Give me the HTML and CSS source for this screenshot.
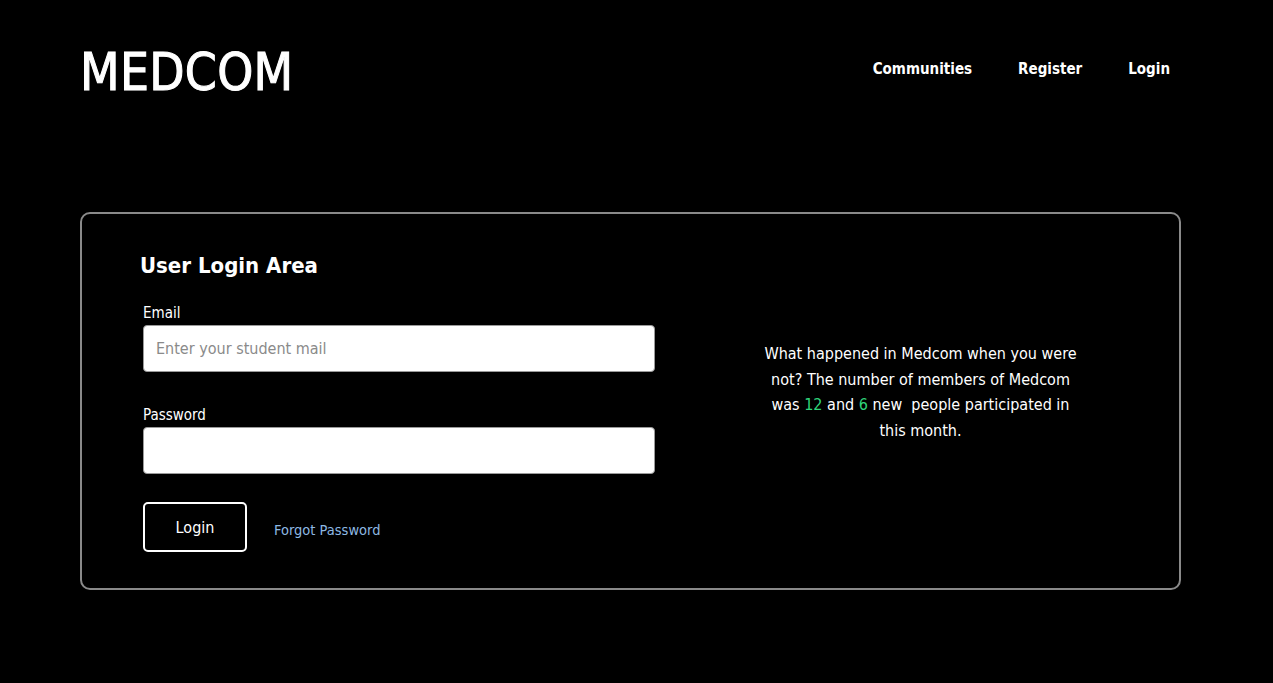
FILE: index.html
```html
<!DOCTYPE html>
<html lang="en">
<head>
<meta charset="utf-8">
<title>Medcom - Login</title>
<link rel="stylesheet" href="styles.css">
</head>
<body>
<header class="topbar">
  <div class="logo">MEDCOM</div>
  <nav class="nav">
    <a href="#" class="nav-link">Communities</a>
    <a href="#" class="nav-link">Register</a>
    <a href="#" class="nav-link">Login</a>
  </nav>
</header>
<main class="main">
  <section class="card">
    <div class="form-col">
      <h1 class="title">User Login Area</h1>
      <form class="form">
        <label class="label" for="email">Email</label>
        <input class="input" id="email" type="text" placeholder="Enter your student mail">
        <label class="label label-second" for="password">Password</label>
        <input class="input" id="password" type="password">
        <div class="actions">
          <button type="button" class="btn">Login</button>
          <a href="#" class="forgot">Forgot Password</a>
        </div>
      </form>
    </div>
    <div class="info-col">
      <p class="info">What happened in Medcom when you were not? The number of members of Medcom was <span class="num">12</span> and <span class="num">6</span> new&nbsp; people participated in this month.</p>
    </div>
  </section>
</main>
</body>
</html>
```
FILE: styles.css
```css
* { box-sizing: border-box; }
html, body { margin: 0; padding: 0; background: #000; }
body {
  color: #fff;
  font-family: "DejaVu Sans Condensed", "Liberation Sans", sans-serif;
  width: 1273px;
  min-height: 683px;
}
.topbar {
  display: flex;
  justify-content: space-between;
  align-items: flex-start;
  padding: 38px 103px 0 80px;
  height: 130px;
}
.logo {
  font-size: 51px;
  font-weight: 400;
  letter-spacing: 0.3px;
  line-height: 64px;
  padding-top: 3px;
  -webkit-text-stroke: 1px #fff;
}
.nav {
  display: flex;
  gap: 46px;
  padding-top: 21px;
}
.nav-link {
  color: #fff;
  text-decoration: none;
  font-weight: 700;
  font-size: 15px;
  line-height: 20px;
}
.main {
  padding: 82px 0 0 80px;
}
.card {
  width: 1101px;
  height: 378px;
  border: 2px solid #8a8a8a;
  border-radius: 10px;
  display: grid;
  grid-template-columns: 582px 1fr;
  padding: 37px 60px 0 58px;
}
.title {
  margin: 0 0 22px;
  font-size: 22px;
  font-weight: 700;
  line-height: 30px;
}
.form {
  display: flex;
  flex-direction: column;
  padding-left: 3px;
  width: 515px;
}
.label {
  font-size: 15px;
  line-height: 20px;
  margin-bottom: 2px;
}
.label-second { margin-top: 33px; }
.input {
  width: 512px;
  height: 47px;
  border: 1px solid #9a9a9a;
  border-radius: 4px;
  background: #fff;
  padding: 0 12px;
  font-family: inherit;
  font-size: 16px;
  color: #222;
}
.input::placeholder { color: #8a8a8a; }
.actions {
  display: flex;
  align-items: center;
  gap: 27px;
  margin-top: 28px;
}
.btn {
  width: 104px;
  height: 50px;
  background: #000;
  color: #fff;
  border: 2px solid #fff;
  border-radius: 5px;
  font-family: inherit;
  font-size: 16px;
  padding: 0;
}
.forgot {
  color: #8db8e3;
  text-decoration: none;
  font-size: 14.5px;
  padding-top: 6px;
}
.info-col {
  display: flex;
  align-items: flex-start;
  justify-content: center;
  padding-top: 90px;
}
.info {
  margin: 0;
  width: 320px;
  text-align: center;
  font-size: 16px;
  line-height: 25.7px;
}
.num { color: #2fd47a; }
```
